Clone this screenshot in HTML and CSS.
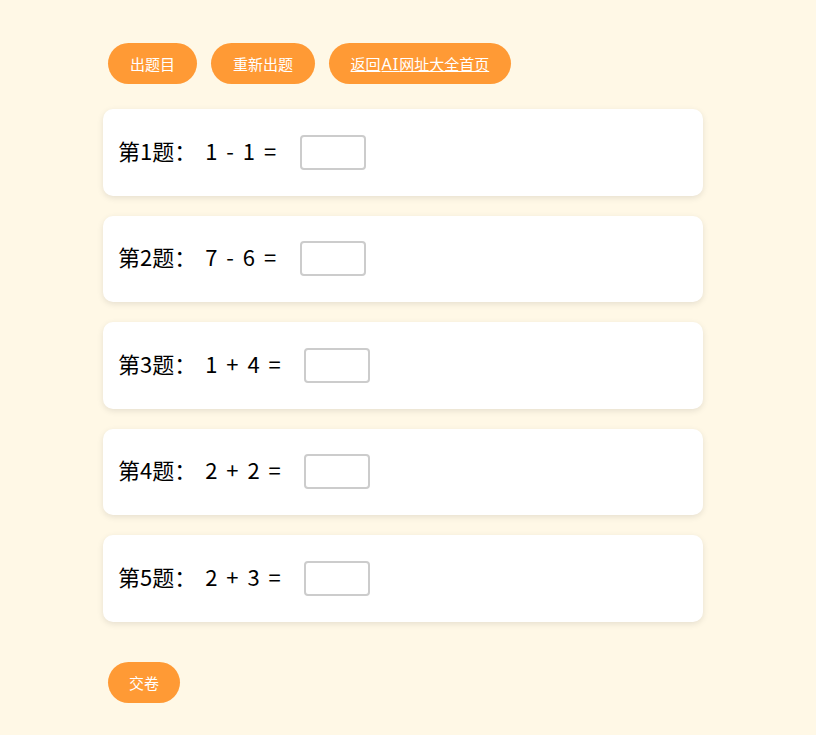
FILE: index.html
```html
<!DOCTYPE html>
<html lang="zh">
<head>
<meta charset="utf-8">
<title>口算练习</title>
<link rel="stylesheet" href="styles.css">
</head>
<body>
<div class="page">
  <div class="toolbar">
    <button class="btn">出题目</button>
    <button class="btn">重新出题</button>
    <a class="btn link" href="#">返回<span class="latin">AI</span>网址大全首页</a>
  </div>
  <div class="list">
    <div class="card"><span class="q">第1题： 1 - 1 =</span><input class="ans" type="text"></div>
    <div class="card"><span class="q">第2题： 7 - 6 =</span><input class="ans" type="text"></div>
    <div class="card"><span class="q">第3题： 1 + 4 =</span><input class="ans" type="text"></div>
    <div class="card"><span class="q">第4题： 2 + 2 =</span><input class="ans" type="text"></div>
    <div class="card"><span class="q">第5题： 2 + 3 =</span><input class="ans" type="text"></div>
  </div>
  <div class="footer">
    <button class="btn submit">交卷</button>
  </div>
</div>
</body>
</html>
```
FILE: styles.css
```css
html, body {
  margin: 0;
  padding: 0;
  background: #fff8e6;
}
body {
  font-family: "Noto Sans CJK SC", "Noto Sans", sans-serif;
  color: #000;
}
.page {
  padding: 43px 0 0 103px;
  width: 600px;
}
.toolbar {
  display: flex;
  gap: 14px;
  padding-left: 5px;
}
.btn {
  display: inline-flex;
  align-items: center;
  justify-content: center;
  height: 41px;
  padding: 0 22px;
  border: none;
  border-radius: 21px;
  background: #ff9a35;
  color: #fff;
  font-family: "Noto Sans CJK SC", sans-serif;
  font-size: 15px;
  box-sizing: border-box;
  cursor: pointer;
}
.submit {
  padding: 0 21px;
}
.link {
  text-decoration: underline;
  padding: 0 21.5px;
}
.latin {
  font-family: "Noto Sans", sans-serif;
  font-size: 16px;
  letter-spacing: 1px;
  padding: 0 0 0 1px;
}
.list {
  display: flex;
  flex-direction: column;
  gap: 20px;
  margin-top: 25px;
}
.card {
  display: flex;
  align-items: center;
  height: 86.5px;
  box-sizing: border-box;
  padding: 0 15px;
  background: #fff;
  border-radius: 10px;
  box-shadow: 0 2px 6px rgba(0, 0, 0, 0.1);
}
.q {
  font-size: 22px;
  word-spacing: 4px;
  white-space: pre;
  margin-bottom: 5px;
}
.ans {
  width: 66px;
  height: 35px;
  box-sizing: border-box;
  margin-left: 23.5px;
  border: 2px solid #cccccc;
  border-radius: 4px;
  font-size: 18px;
  outline: none;
}
.footer {
  margin-top: 40px;
  padding-left: 5px;
}
```
